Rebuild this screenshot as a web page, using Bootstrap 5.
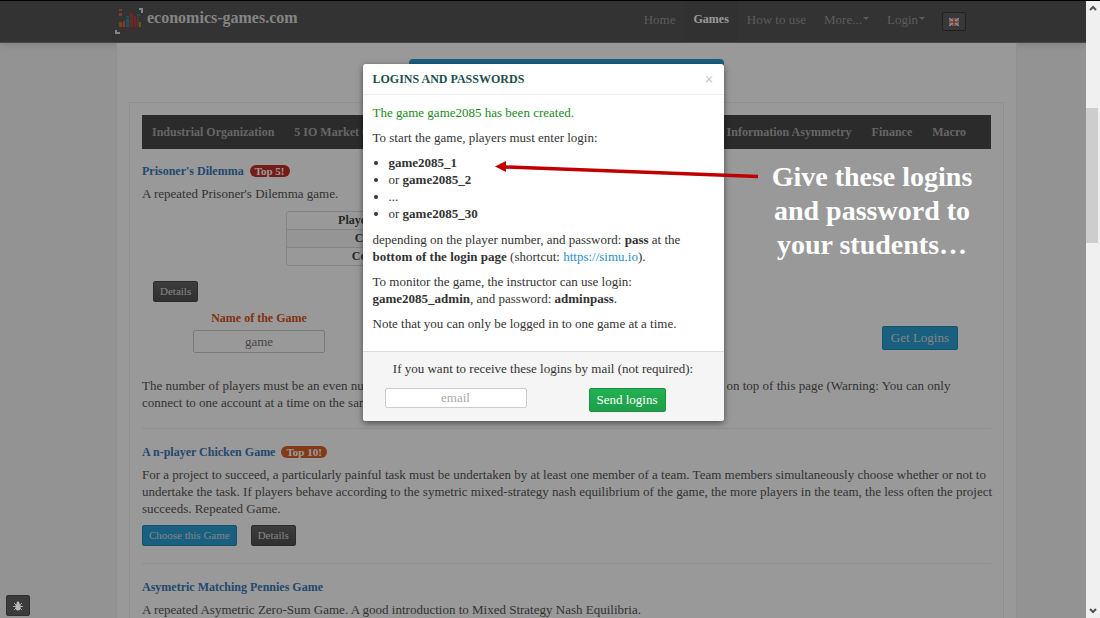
<!DOCTYPE html>
<html lang="en">
<head>
<meta charset="utf-8">
<meta name="viewport" content="width=device-width, initial-scale=1">
<title>economics-games.com</title>
<link href="https://cdn.jsdelivr.net/npm/bootstrap@5.3.0/dist/css/bootstrap.min.css" rel="stylesheet">
<style>
body{font-family:"Liberation Serif",serif;font-size:13px;line-height:17px;color:#555;height:100vh;overflow:hidden;background:#f5f5f5}
p{margin-bottom:8px}
.viewport{min-width:0;background:#f5f5f5}
.topbar{background:#555;border-top:1px solid #000;border-bottom:1px solid #777;height:43px;padding:0 120px 0 115px;box-shadow:0 1px 8px rgba(0,0,0,.15)}
.topbar .navbar-brand{font-size:16px;font-weight:700;color:#ddd;line-height:20px;padding:4px 0 0}
.topbar .navbar-brand span{padding-top:3px}
.topbar .nav-link{color:#999;font-size:13px;line-height:37px;padding:0 9px}
.topbar .nav-link.active{color:#fff;font-size:12px;font-weight:700;background:#525252}
.topbar .dropdown-toggle::after{margin-left:1px;border-width:3px 3px 0;vertical-align:4px}
.flagbtn{width:24px;height:19px;margin:11px 0 0 8px;background:#5e5e5e;border:1px solid #383838;border-radius:2px}
.sheet{margin:0 69px 0 116px;background:#fff;border:1px solid #eee;border-width:0 1px;padding:16px 12px}
.cta{width:315px;height:33px;background:#2a9fd6;border:0;border-radius:4px}
.catalog{border:1px solid #eee;padding:12px 12px 30px;margin-top:7px}
.cats{background:#484848;height:34px;padding:0 15px 0 0}
.cats .nav-link{font-size:12px;font-weight:700;color:#aaa;padding:0 10px;line-height:34px}
.game-first{padding-top:14px}
.gtitle{font-size:12px;line-height:17px;font-weight:700;margin:0 0 5px}
.gtitle a{color:#3a79b7;text-decoration:none}
.pill{font-size:11px;line-height:12px;border-radius:6px;padding:0 5px;color:#fff;background:#c4302b;margin-left:3px;display:inline-block}
.pill.warm{background:#d9622b}
.payoff{width:435px;margin:9px 0 0 144px;border:1px solid #ddd;border-collapse:separate;border-spacing:0;border-radius:3px;font-size:12px;font-weight:700;color:#444;text-align:center}
.payoff th,.payoff td{width:33%;line-height:17px;padding:0}
.payoff td{border-top:1px solid #ddd}
.payoff tr:nth-child(2) td{background:#f9f9f9}
.btn{font-family:inherit;--bs-btn-border-radius:2px;padding:0 6px}
.btn-gray{background:linear-gradient(#666,#505050);border:1px solid #484848;color:#ddd;font-size:11px;line-height:19px}
.btn-blue{background:#2a9fd6;border:1px solid #2386b5;color:#ddd;font-size:11px;line-height:19px}
.btn-getlog{font-size:13px;line-height:22px;padding:0 8px;margin-bottom:3px}
.btn-send{background:linear-gradient(#22b152,#1e9e49);border:1px solid #1b9143;color:#fff;font-size:13px;line-height:22px;padding:0 7px}
.field{font-size:13px;line-height:17px;text-align:center;border:1px solid #ccc;border-radius:2px;padding:2px 6px;color:#777;background:#fff}
.field::placeholder{color:#aaa}
.details{padding:15px 0 0 11px}
.setup{padding:8px 33px 0 51px}
.gamename{width:132px}
.gamename label{color:#d9531e;font-size:12px;margin-bottom:3px}
.howto{margin-top:24px}
.choose{gap:14px}
.divider{border-top:1px solid #efefef;opacity:1;margin:17px 0 15px}
.shade{background:rgba(0,0,0,.4)}
.dialogbox{width:361px;top:64px;left:0;right:0;margin:0 auto;background:#fff;border-radius:3px;box-shadow:0 2px 6px rgba(0,0,0,.5);color:#333}
.dialogbox header{height:31px;padding:0 10px;border-bottom:1px solid #eee}
.dialogbox h2{font-size:12px;font-weight:700;color:#1b5050;margin:0}
.dialogbox a{color:#2a8fcb;text-decoration:none}
.xbtn{border:0;background:none;color:#bbb;font-size:16px;padding:0}
.dbody{padding:9px 10px 11px}
.dbody ul{padding-left:16px;margin-bottom:9px}
.created{color:#1c8a1c}
.dfoot{background:#f5f5f5;border-top:1px solid #ddd;border-radius:0 0 3px 3px;padding:8px 22px 9px}
.mailrow{gap:62px;margin-top:11px}
.mailrow .field{width:142px;line-height:16px;padding:1px 6px}
.bugbtn{left:6px;bottom:2px;width:24px;height:21px;background:#3b3b3b;border:1px solid #303030;border-radius:2px}
.scroller{width:14px;background:#f0f0f0;border-top:1px solid #000}
.thumb{margin-top:107px;height:135px;width:12px;background:#cdcdcd}
.sup,.sdown{left:3px}
.sup{top:4px}
.sdown{bottom:4px}
.note{left:757px;top:160px;width:230px;color:#fff;font-size:28px;line-height:34px;font-weight:700;text-align:center;margin:0}
.arrow{left:495px;top:155px}
</style>
</head>
<body class="d-flex">
<div class="viewport flex-grow-1 position-relative overflow-hidden">
<nav class="topbar d-flex justify-content-between">
<a class="navbar-brand d-flex gap-1 m-0" href="#"><svg width="28" height="30" viewBox="0 0 28 30"><path d="M24 4h3v4M1 25v3h4" fill="none" stroke="#ddd" stroke-width="2"/><path d="M4 4h3v2H4zM4 8h3v3H4zM4 17h3v5H4zM8 16h2v6H8z" fill="#d06a3c"/><path d="M11 11h3v2h-3zM11 14h3v8h-3z" fill="#3a85ac"/><path d="M15 8h3v14h-3zM19 11h2v11h-2zM22 14h2v8h-2zM7 18h1v4H7z" fill="#b8443c"/><path d="M22 9h3v2h-3zM22 12h2v1h-2z" fill="#3c8c70"/><path d="M24 17h2v5h-2z" fill="#84a13c"/><path d="M5 24h2v1H5zM10 24h3v2h-3zM16 24h2v3h-2zM21 24h2v1h-2z" fill="#7a4a42"/></svg><span>economics-games.com</span></a>
<div class="nav flex-nowrap">
<a class="nav-link" href="#">Home</a><a class="nav-link active" href="#">Games</a><a class="nav-link" href="#">How to use</a><a class="nav-link dropdown-toggle" href="#">More...</a><a class="nav-link dropdown-toggle" href="#">Login</a>
<button class="flagbtn d-flex align-items-center justify-content-center p-0" aria-label="Language"><svg width="10" height="8" viewBox="0 0 10 8"><path fill="#5b6ea8" d="M0 0h10v8H0z"/><path d="M0 0l10 8M10 0L0 8" stroke="#eee" stroke-width="1.600"/><path d="M5 0v8M0 4h10" stroke="#eee" stroke-width="3"/><path d="M5 0v8M0 4h10" stroke="#e05040" stroke-width="1.600"/></svg></button>
</div>
</nav>
<main class="sheet">
<div class="text-center"><button class="cta" aria-label="Create a game"></button></div>
<section class="catalog">
<div class="cats nav flex-nowrap"><a class="nav-link" href="#">Industrial Organization</a><a class="nav-link" href="#">5 IO Market Games</a><a class="nav-link ms-auto" href="#">Information Asymmetry</a><a class="nav-link" href="#">Finance</a><a class="nav-link" href="#">Macro</a></div>
<article class="game-first">
<h3 class="gtitle"><a href="#">Prisoner's Dilemma</a> <span class="pill">Top 5!</span></h3>
<p>A repeated Prisoner's Dilemma game.</p>
<table class="payoff"><tr><th>Player 1</th><th></th><th></th></tr><tr><td>C</td><td></td><td></td></tr><tr><td>Co</td><td></td><td></td></tr></table>
<div class="details"><button class="btn btn-gray">Details</button></div>
<div class="setup d-flex justify-content-between align-items-end"><div class="gamename"><label for="gname" class="d-block text-center fw-bold">Name of the Game</label><input id="gname" class="field w-100 d-block" value="game"></div><button class="btn btn-blue btn-getlog">Get Logins</button></div>
<p class="howto text-nowrap">The number of players must be an even number. Players use the logins that you give to them, and they all log in on top of this page (Warning: You can only<br>connect to one account at a time on the same browser).</p>
</article>
<hr class="divider">
<article>
<h3 class="gtitle"><a href="#">A n-player Chicken Game</a> <span class="pill warm">Top 10!</span></h3>
<p class="text-nowrap">For a project to succeed, a particularly painful task must be undertaken by at least one member of a team. Team members simultaneously choose whether or not to<br>undertake the task. If players behave according to the symetric mixed-strategy nash equilibrium of the game, the more players in the team, the less often the project<br>succeeds. Repeated Game.</p>
<div class="d-flex choose"><button class="btn btn-blue">Choose this Game</button><button class="btn btn-gray">Details</button></div>
</article>
<hr class="divider">
<article>
<h3 class="gtitle"><a href="#">Asymetric Matching Pennies Game</a></h3>
<p>A repeated Asymetric Zero-Sum Game. A good introduction to Mixed Strategy Nash Equilibria.</p>
</article>
</section>
</main>
<div class="shade position-absolute top-0 start-0 w-100 h-100"></div>
<div class="dialogbox position-absolute" role="dialog" aria-labelledby="dtitle">
<header class="d-flex align-items-center justify-content-between"><h2 id="dtitle">LOGINS AND PASSWORDS</h2><button class="xbtn" aria-label="Close">×</button></header>
<div class="dbody">
<p class="created">The game game2085 has been created.</p>
<p>To start the game, players must enter login:</p>
<ul><li><b>game2085_1</b></li><li>or <b>game2085_2</b></li><li>...</li><li>or <b>game2085_30</b></li></ul>
<p>depending on the player number, and password: <b>pass</b> at the<br><b>bottom of the login page</b> (shortcut: <a href="#">https://simu.io</a>).</p>
<p>To monitor the game, the instructor can use login:<br><b>game2085_admin</b>, and password: <b>adminpass</b>.</p>
<p>Note that you can only be logged in to one game at a time.</p>
</div>
<div class="dfoot"><label for="mail" class="d-block text-center">If you want to receive these logins by mail (not required):</label>
<div class="d-flex align-items-start mailrow"><input id="mail" class="field" placeholder="email"><button class="btn btn-send">Send logins</button></div></div>
</div>
<button class="bugbtn position-absolute d-flex align-items-center justify-content-center p-0" aria-label="Report a bug"><svg width="10" height="10" viewBox="0 0 10 10"><path d="M1 2l2 2M9 2L7 4M0 5.500h10M1 9l2-2M9 9L7 7" stroke="#aaa"/><ellipse cx="5" cy="6" rx="2.600" ry="3.500" fill="#bbb"/><circle cx="5" cy="2" r="1.500" fill="#bbb"/></svg></button>
<svg class="arrow position-absolute" width="264" height="26" viewBox="0 0 264 26"><path d="M10 12L263 21.500" stroke="#c00000" stroke-width="3.500"/><path d="M0 11.500L11 6v11z" fill="#c00000"/></svg>
<p class="note position-absolute">Give these logins<br>and password to<br>your students…</p>
</div>
<div class="scroller position-relative flex-shrink-0"><svg class="sup position-absolute" width="8" height="6"><path d="M1 5l3-3 3 3" fill="none" stroke="#555" stroke-width="2"/></svg><div class="thumb"></div><svg class="sdown position-absolute" width="8" height="6"><path d="M1 1l3 3 3-3" fill="none" stroke="#555" stroke-width="2"/></svg></div>
<script src="https://cdn.jsdelivr.net/npm/bootstrap@5.3.0/dist/js/bootstrap.bundle.min.js"></script>
</body>
</html>
